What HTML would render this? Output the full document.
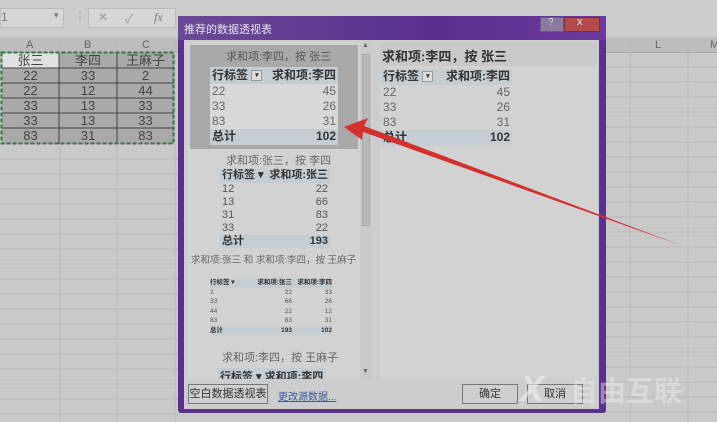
<!DOCTYPE html>
<html><head><meta charset="utf-8"><style>
*{margin:0;padding:0;box-sizing:border-box}
body{width:717px;height:422px;overflow:hidden;background:#c9c9c9;position:relative;font-family:"Liberation Sans","Noto Sans CJK SC",sans-serif;color:#333}
.a{position:absolute}
.t{position:absolute;font-size:12px;white-space:nowrap}
.row{display:flex;justify-content:space-between}
</style></head><body>
<div class="a" style="left:0;top:0;width:717px;height:35px;background:#cdcdcd"></div>
<div class="a" style="left:0;top:8px;width:64px;height:20px;background:#d6d6d6;border:1px solid #bbb"></div>
<div class="t" style="left:1px;top:10px;color:#777">1</div>
<div class="t" style="left:54px;top:10px;font-size:9px;color:#777">▾</div>
<div class="t" style="left:74px;top:10px;color:#999">⋮</div>
<div class="a" style="left:88px;top:8px;width:88px;height:20px;background:#d6d6d6;border:1px solid #bbb"></div>
<div class="t" style="left:98px;top:10px;color:#999">✕</div>
<div class="t" style="left:125px;top:10px;color:#999">✓</div>
<div class="t" style="left:154px;top:10px;color:#777;font-style:italic;font-family:'Liberation Serif',serif">fx</div>
<div class="a" style="left:0;top:38px;width:717px;height:15px;background:#bdbdbd;border-bottom:1px solid #aaa"></div>
<div class="t" style="left:26px;top:39px;font-size:11px;color:#666">A</div>
<div class="t" style="left:84px;top:39px;font-size:11px;color:#666">B</div>
<div class="t" style="left:142px;top:39px;font-size:11px;color:#666">C</div>
<div class="t" style="left:655px;top:39px;font-size:11px;color:#666">L</div>
<div class="t" style="left:710px;top:39px;font-size:11px;color:#666">M</div>
<svg class="a" style="left:0;top:0" width="717" height="422">
<g stroke="#b9b9b9" stroke-width="1">
<line x1="60" y1="38" x2="60" y2="422"/><line x1="117" y1="38" x2="117" y2="422"/><line x1="175" y1="38" x2="175" y2="422"/>
<line x1="630" y1="38" x2="630" y2="422"/><line x1="688" y1="38" x2="688" y2="422"/>
<line x1="0" y1="159" x2="180" y2="159"/><line x1="0" y1="174" x2="180" y2="174"/><line x1="0" y1="189" x2="180" y2="189"/><line x1="0" y1="204" x2="180" y2="204"/><line x1="0" y1="219" x2="180" y2="219"/><line x1="0" y1="234" x2="180" y2="234"/><line x1="0" y1="249" x2="180" y2="249"/><line x1="0" y1="264" x2="180" y2="264"/><line x1="0" y1="279" x2="180" y2="279"/><line x1="0" y1="294" x2="180" y2="294"/><line x1="0" y1="309" x2="180" y2="309"/><line x1="0" y1="324" x2="180" y2="324"/><line x1="0" y1="339" x2="180" y2="339"/><line x1="0" y1="354" x2="180" y2="354"/><line x1="0" y1="369" x2="180" y2="369"/><line x1="0" y1="384" x2="180" y2="384"/><line x1="0" y1="399" x2="180" y2="399"/><line x1="0" y1="414" x2="180" y2="414"/>
</g>
<g stroke="#b9b9b9"><line x1="605" y1="67" x2="717" y2="67"/><line x1="605" y1="82" x2="717" y2="82"/><line x1="605" y1="97" x2="717" y2="97"/><line x1="605" y1="112" x2="717" y2="112"/><line x1="605" y1="127" x2="717" y2="127"/><line x1="605" y1="142" x2="717" y2="142"/><line x1="605" y1="157" x2="717" y2="157"/><line x1="605" y1="172" x2="717" y2="172"/><line x1="605" y1="187" x2="717" y2="187"/><line x1="605" y1="202" x2="717" y2="202"/><line x1="605" y1="217" x2="717" y2="217"/><line x1="605" y1="232" x2="717" y2="232"/><line x1="605" y1="247" x2="717" y2="247"/><line x1="605" y1="262" x2="717" y2="262"/><line x1="605" y1="277" x2="717" y2="277"/><line x1="605" y1="292" x2="717" y2="292"/><line x1="605" y1="307" x2="717" y2="307"/><line x1="605" y1="322" x2="717" y2="322"/><line x1="605" y1="337" x2="717" y2="337"/><line x1="605" y1="352" x2="717" y2="352"/><line x1="605" y1="367" x2="717" y2="367"/><line x1="605" y1="382" x2="717" y2="382"/><line x1="605" y1="397" x2="717" y2="397"/><line x1="605" y1="412" x2="717" y2="412"/></g>
</svg>
<div class="a" style="left:2px;top:53px;width:172px;height:91px;background:#a9a9a9"></div>
<div class="a" style="left:2px;top:53px;width:57px;height:15px;background:#e0e0e0"></div>
<svg class="a" style="left:0;top:0" width="180" height="150">
<g stroke="#444" stroke-width="1"><line x1="59" y1="53" x2="59" y2="144"/><line x1="117" y1="53" x2="117" y2="144"/>
<line x1="2" y1="68" x2="174" y2="68"/><line x1="2" y1="83" x2="174" y2="83"/><line x1="2" y1="98" x2="174" y2="98"/><line x1="2" y1="113" x2="174" y2="113"/><line x1="2" y1="128" x2="174" y2="128"/></g>
<rect x="1.5" y="52.5" width="172" height="91" fill="none" stroke="#2e7a3c" stroke-width="2" stroke-dasharray="4,2"/>
</svg>
<div class="a" style="left:2px;top:53px;width:172px;font-size:13px;color:#444;line-height:15px">
<div style="display:flex;text-align:center"><span style="width:57px">张三</span><span style="width:58px">李四</span><span style="width:57px">王麻子</span></div>
<div style="display:flex;text-align:center"><span style="width:57px">22</span><span style="width:58px">33</span><span style="width:57px">2</span></div>
<div style="display:flex;text-align:center"><span style="width:57px">22</span><span style="width:58px">12</span><span style="width:57px">44</span></div>
<div style="display:flex;text-align:center"><span style="width:57px">33</span><span style="width:58px">13</span><span style="width:57px">33</span></div>
<div style="display:flex;text-align:center"><span style="width:57px">33</span><span style="width:58px">13</span><span style="width:57px">33</span></div>
<div style="display:flex;text-align:center"><span style="width:57px">83</span><span style="width:58px">31</span><span style="width:57px">83</span></div>
</div>
<div class="a" style="left:178px;top:16px;width:428px;height:397px;background:#5b2f8c;border-radius:3px"></div>
<div class="a" style="left:178px;top:16px;width:428px;height:24px;background:linear-gradient(90deg,#6a4a96,#5a2e90 60%,#6b3a9c)"></div>
<div class="t" style="left:184px;top:21px;font-size:11px;color:#e8e0f0">推荐的数据透视表</div>
<div class="a" style="left:540px;top:17px;width:24px;height:15px;background:#8a7aa0;border:1px solid #6a5a80"></div>
<div class="t" style="left:548px;top:17px;font-size:10px;color:#ddd">?</div>
<div class="a" style="left:564px;top:17px;width:36px;height:15px;background:#b54a4a;border:1px solid #7a3030"></div>
<div class="t" style="left:577px;top:16px;font-size:11px;color:#eee">x</div>
<div class="a" style="left:184px;top:40px;width:415px;height:369px;background:#cdcdcd"></div>
<div class="a" style="left:188px;top:42px;width:172px;height:337px;background:#d2d2d2;overflow:hidden">
 <div class="a" style="left:2px;top:3px;width:168px;height:104px;background:#a9a9a9"></div>
 <div class="t" style="left:38px;top:6px;font-size:11px;color:#555">求和项:李四，按 张三</div>
 <div class="a" style="left:22px;top:25px;width:128px;font-size:12px;line-height:15px">
  <div class="row" style="background:#c4ccd4;font-weight:bold;padding:0 2px;height:17px;line-height:17px"><span>行标签 <span style="display:inline-block;width:11px;height:11px;border:1px solid #999;background:#ddd;font-size:7px;line-height:9px;text-align:center;vertical-align:middle">▾</span></span><span>求和项:李四</span></div>
  <div style="background:#d8d8d8;padding:0 2px">
  <div class="row" style="color:#666"><span>22</span><span>45</span></div>
  <div class="row" style="color:#666"><span>33</span><span>26</span></div>
  <div class="row" style="color:#666"><span>83</span><span>31</span></div></div>
  <div class="row" style="background:#c4ccd4;font-weight:bold;padding:0 2px;height:16px"><span>总计</span><span>102</span></div>
 </div>
 <div class="t" style="left:38px;top:110px;font-size:11px;color:#666">求和项:张三，按 李四</div>
 <div class="a" style="left:32px;top:127px;width:110px;font-size:11px;line-height:13px">
  <div class="row" style="background:#c4ccd4;font-weight:bold;padding:0 2px;height:14px"><span>行标签 ▾</span><span>求和项:张三</span></div>
  <div class="row" style="color:#555;padding:0 2px"><span>12</span><span>22</span></div>
  <div class="row" style="color:#555;padding:0 2px"><span>13</span><span>66</span></div>
  <div class="row" style="color:#555;padding:0 2px"><span>31</span><span>83</span></div>
  <div class="row" style="color:#555;padding:0 2px"><span>33</span><span>22</span></div>
  <div class="row" style="background:#c4ccd4;font-weight:bold;padding:0 2px"><span>总计</span><span>193</span></div>
 </div>
 <div class="t" style="left:3px;top:210px;font-size:9.5px;color:#666">求和项:张三 和 求和项:李四，按 王麻子</div>
 <div class="a" style="left:22px;top:236px;width:122px;font-size:6.5px;line-height:9.5px">
  <div style="display:flex;background:#c4ccd4;font-weight:bold"><span style="width:40px">行标签 ▾</span><span style="width:42px;text-align:right">求和项:张三</span><span style="width:40px;text-align:right">求和项:李四</span></div>
  <div style="display:flex;color:#555"><span style="width:40px">2</span><span style="width:42px;text-align:right">22</span><span style="width:40px;text-align:right">33</span></div>
  <div style="display:flex;color:#555"><span style="width:40px">33</span><span style="width:42px;text-align:right">66</span><span style="width:40px;text-align:right">26</span></div>
  <div style="display:flex;color:#555"><span style="width:40px">44</span><span style="width:42px;text-align:right">22</span><span style="width:40px;text-align:right">12</span></div>
  <div style="display:flex;color:#555"><span style="width:40px">83</span><span style="width:42px;text-align:right">83</span><span style="width:40px;text-align:right">31</span></div>
  <div style="display:flex;background:#c4ccd4;font-weight:bold"><span style="width:40px">总计</span><span style="width:42px;text-align:right">193</span><span style="width:40px;text-align:right">102</span></div>
 </div>
 <div class="t" style="left:34px;top:307px;font-size:11px;color:#666">求和项:李四，按 王麻子</div>
 <div class="a" style="left:30px;top:326px;width:108px;font-size:11px;background:#c4ccd4;font-weight:bold;height:15px;padding:0 2px" ><span>行标签 ▾ 求和项:李四</span></div>
</div>
<div class="a" style="left:360px;top:42px;width:12px;height:337px;background:#cacaca"></div>
<div class="a" style="left:362px;top:54px;width:8px;height:172px;background:#b8b8b8;border:1px solid #a8a8a8;border-radius:1px"></div>
<div class="t" style="left:362px;top:42px;font-size:7px;color:#666">▲</div>
<div class="t" style="left:362px;top:368px;font-size:7px;color:#666">▼</div>
<div class="a" style="left:380px;top:42px;width:217px;height:336px;background:#d2d2d2"></div>
<div class="a" style="left:380px;top:42px;width:217px;height:24px;background:#c9c9c9"></div>
<div class="t" style="left:382px;top:46px;font-size:13px;font-weight:bold;color:#333">求和项:李四，按 张三</div>
<div class="a" style="left:381px;top:69px;width:131px;font-size:12px;line-height:15px">
  <div class="row" style="background:#c4ccd4;font-weight:bold;padding:0 2px;height:16px"><span>行标签 <span style="display:inline-block;width:11px;height:11px;border:1px solid #999;background:#ddd;font-size:7px;line-height:9px;text-align:center;vertical-align:middle">▾</span></span><span>求和项:李四</span></div>
  <div class="row" style="color:#666;padding:0 2px"><span>22</span><span>45</span></div>
  <div class="row" style="color:#666;padding:0 2px"><span>33</span><span>26</span></div>
  <div class="row" style="color:#666;padding:0 2px"><span>83</span><span>31</span></div>
  <div class="row" style="background:#c4ccd4;font-weight:bold;padding:0 2px;height:16px"><span>总计</span><span>102</span></div>
</div>
<div class="a" style="left:188px;top:384px;width:80px;height:20px;background:#cfcfcf;border:1px solid #777;font-size:11px;text-align:center;line-height:18px">空白数据透视表</div>
<div class="t" style="left:278px;top:388px;font-size:10px;color:#3a5a9a;text-decoration:underline">更改源数据...</div>
<div class="a" style="left:462px;top:384px;width:56px;height:20px;background:#cfcfcf;border:1px solid #777;font-size:11px;text-align:center;line-height:18px">确定</div>
<div class="a" style="left:527px;top:384px;width:56px;height:20px;background:#cfcfcf;border:1px solid #777;font-size:11px;text-align:center;line-height:18px">取消</div>
<svg class="a" style="left:0;top:0" width="717" height="422">
<polygon points="344,127 368,118 364,126 680,245 363,132 362,140" fill="#d4302e"/>
</svg>
<div class="t" style="left:520px;top:368px;font-size:36px;font-weight:bold;color:rgba(240,240,240,0.6);font-style:italic">X</div>
<div class="t" style="left:570px;top:370px;font-size:28px;font-weight:bold;color:rgba(240,240,240,0.45)">自由互联</div>
</body></html>
